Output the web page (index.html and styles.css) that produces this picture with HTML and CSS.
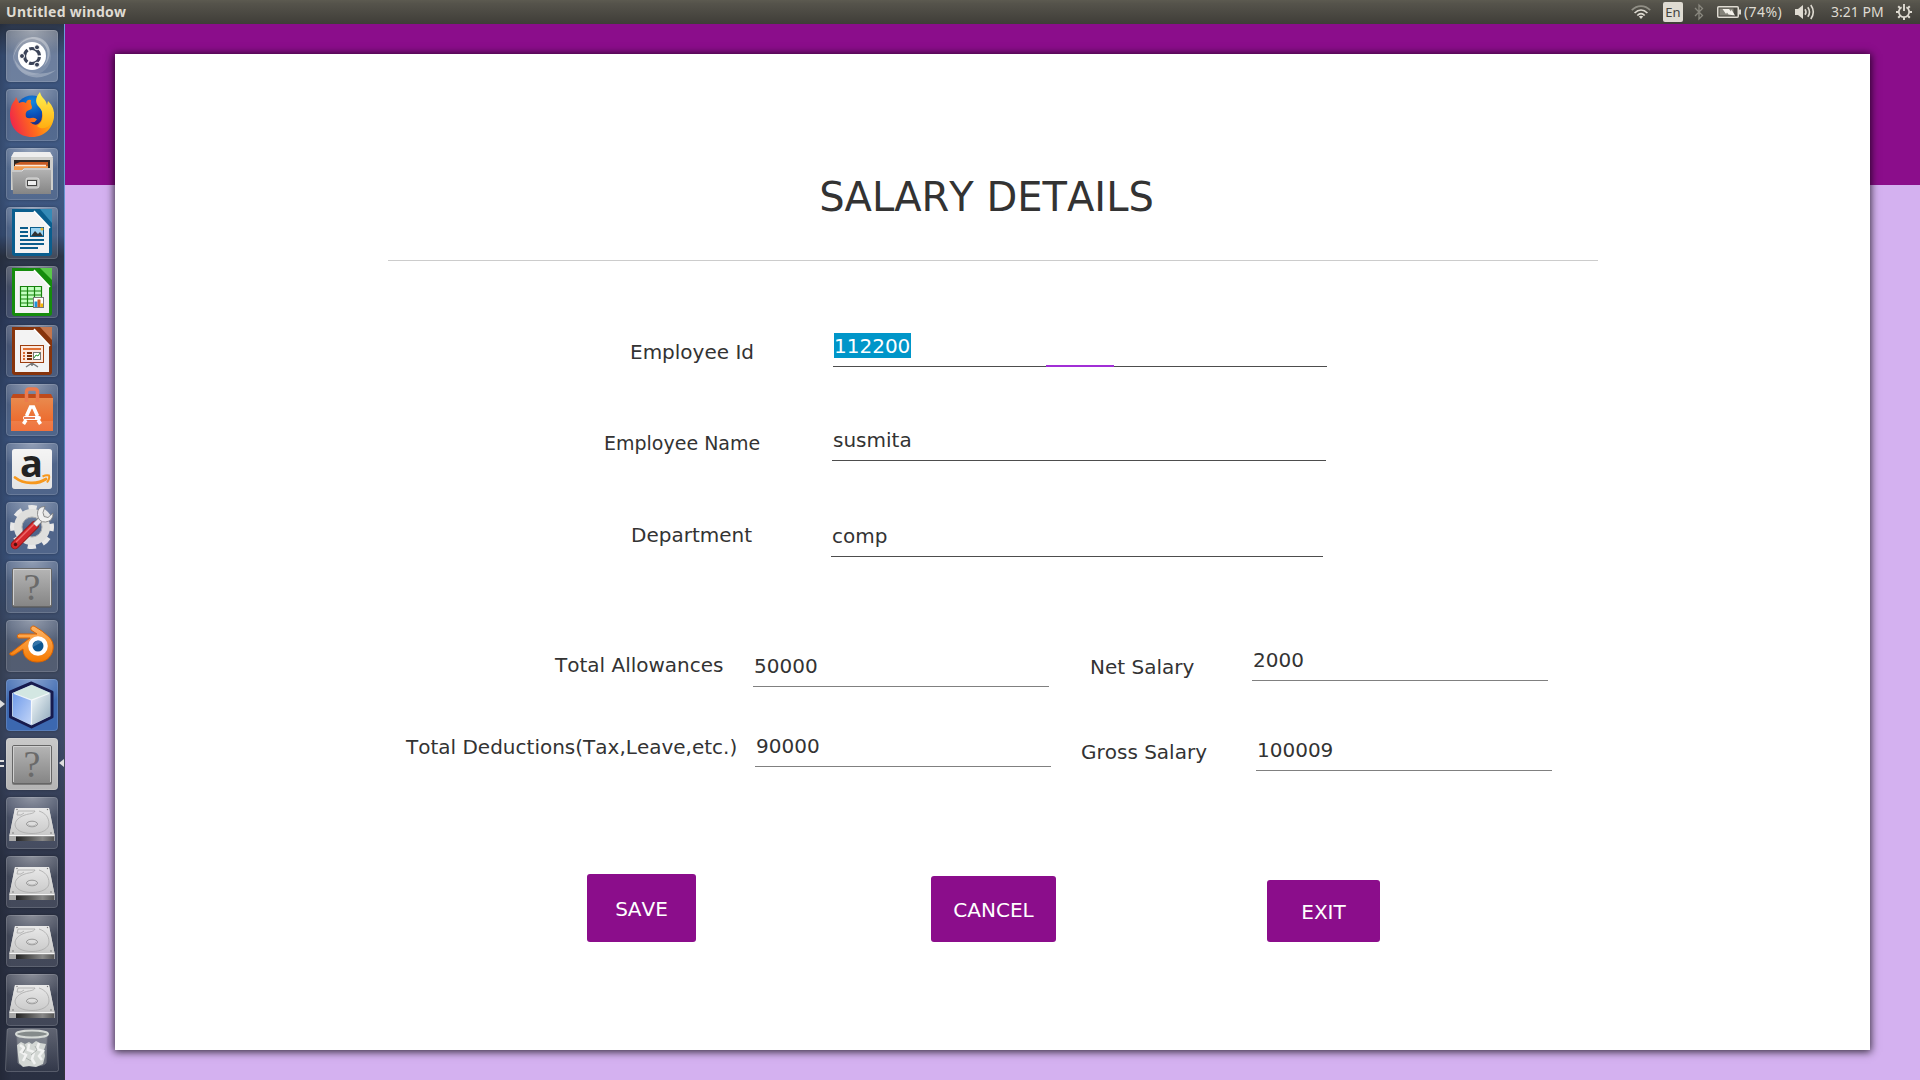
FILE: index.html
```html
<!DOCTYPE html>
<html lang="en">
<head>
<meta charset="utf-8">
<title>Untitled window</title>
<link rel="stylesheet" href="styles.css">
</head>
<body>
<svg class="defs" width="0" height="0" aria-hidden="true">
  <defs>
    <linearGradient id="gloss" x1="0" y1="0" x2="0" y2="1"><stop offset="0" stop-color="#fff" stop-opacity=".25"/><stop offset="1" stop-color="#fff" stop-opacity=".04"/></linearGradient>
    <linearGradient id="silver" x1="0" y1="0" x2="0" y2="1"><stop offset="0" stop-color="#e9e9e9"/><stop offset="1" stop-color="#c9c9c9"/></linearGradient>
    <linearGradient id="gray" x1="0" y1="0" x2="0" y2="1"><stop offset="0" stop-color="#b5b5b5"/><stop offset="1" stop-color="#858585"/></linearGradient>
    <linearGradient id="slot" x1="0" y1="0" x2="1" y2="0"><stop offset="0" stop-color="#222"/><stop offset=".7" stop-color="#888"/><stop offset="1" stop-color="#555"/></linearGradient>
    <linearGradient id="fox" x1="0" y1=".6" x2="1" y2=".3"><stop offset="0" stop-color="#f0264a"/><stop offset=".45" stop-color="#ff6a1c"/><stop offset=".8" stop-color="#ffa80f"/><stop offset="1" stop-color="#ffde2c"/></linearGradient>
    <linearGradient id="tail" x1="0" y1="0" x2="0" y2="1"><stop offset="0" stop-color="#fff251"/><stop offset="1" stop-color="#ffad10"/></linearGradient>
    <radialGradient id="globe" cx=".5" cy=".2" r=".8"><stop offset="0" stop-color="#1488e0"/><stop offset=".5" stop-color="#0a50b8"/><stop offset="1" stop-color="#20216e"/></radialGradient>
    <linearGradient id="bag" x1="0" y1="0" x2="0" y2="1"><stop offset="0" stop-color="#e98a4e"/><stop offset="1" stop-color="#ee5f22"/></linearGradient>
    <linearGradient id="blend" x1="0" y1="0" x2="0" y2="1"><stop offset="0" stop-color="#ffb668"/><stop offset="1" stop-color="#f57900"/></linearGradient>
    <linearGradient id="cubeL" x1="0" y1="0" x2="1" y2="1"><stop offset="0" stop-color="#6f9bea"/><stop offset="1" stop-color="#c4d6f8"/></linearGradient>
    <linearGradient id="cubeR" x1="0" y1="0" x2="1" y2="1"><stop offset="0" stop-color="#f4fafb"/><stop offset="1" stop-color="#90a9bb"/></linearGradient>
    <symbol id="unknown" viewBox="0 0 52 52" overflow="visible">
      <rect x="6" y="8" width="40" height="39" rx="2" fill="#555" opacity=".6"/>
      <rect x="6.500" y="7.500" width="39" height="38" rx="1.500" fill="url(#gray)" stroke="#666"/>
      <path d="M7.500 44V8.500h37V44" fill="none" stroke="#d0d0d0"/>
      <text x="26" y="38.500" class="glyph-q">?</text>
    </symbol>
    <symbol id="disk" viewBox="0 0 52 52">
      <path d="M9 11h34l5.500 27v6H3.500v-6z" fill="#d2d2d0"/>
      <path d="M9 11h34l5.500 27h-45z" fill="url(#silver)"/>
      <path d="M3.500 38.500h45v5.500h-45z" fill="#a9a9a9"/>
      <path d="M10 39.500h38v4.500H10z" fill="url(#slot)"/>
      <path d="M3.500 38.500h45" stroke="#f5f5f5"/>
      <path d="M12 14h17c-1 3-6 2.500-10 4-6 2-9 5-10 9 0 6 7 9.500 17 9.500s17-4 17-9.500c0-7-4-11-10-13M12 14l-1 4h4l3-2" fill="none" stroke="#a9a9a9" stroke-width=".8"/>
      <ellipse cx="26" cy="27" rx="5.500" ry="2.800" fill="#ddd" stroke="#999"/>
      <path d="M22 27a4 2 0 0 0 8 0" fill="none" stroke="#aaa" stroke-width=".7"/>
      <g fill="#777"><circle cx="11" cy="12.500" r=".7"/><circle cx="41.500" cy="12.500" r=".7"/><circle cx="7" cy="36" r=".8"/><circle cx="45" cy="36" r=".8"/></g>
    </symbol>
  </defs>
</svg>

<header class="panel">
  <span class="panel-title">Untitled window</span>
  <div class="indicators">
    <svg class="ind-wifi" width="20" height="14" viewBox="0 0 20 14"><g fill="none" stroke-width="1.700"><path d="M.8 5.200C6-.2 14-.2 19.200 5.200" stroke="#918f86"/><path d="M3.600 8c4-4 8.800-4 12.800 0M6.300 10.500c2.300-2.300 5.100-2.300 7.400 0" stroke="#dfdbd2"/></g><path d="M7.800 11.500Q10 9.800 12.200 11.500L10 14z" fill="#dfdbd2"/></svg>
    <span class="ind-lang">En</span>
    <svg class="ind-bt" width="10" height="16" viewBox="0 0 10 16"><path d="M1 4l7.500 7.500L5 15V1l3.500 3.500L1 12" fill="none" stroke="#8a887f" stroke-width="1.300"/></svg>
    <svg class="ind-bat" width="24" height="12" viewBox="0 0 24 12"><rect x=".75" y=".75" width="20.500" height="10.500" rx="1" fill="none" stroke="#dfdbd2" stroke-width="1.500"/><rect x="2.500" y="2.500" width="14" height="7" fill="#85837a"/><rect x="22" y="3.500" width="2" height="5" fill="#dfdbd2"/><path d="M5.500 3l6.500 0 2 2.500.5-2L18 9.500l-6.500-1-1.500-2-1 1.500z" fill="#f4f1ea"/></svg>
    <span class="ind-pct">(74%)</span>
    <svg class="ind-vol" width="20" height="16" viewBox="0 0 20 16"><path d="M0 5h3l5-4v14l-5-4H0z" fill="#dfdbd2"/><path d="M10 5.200q2 2.800 0 5.600M12.800 3.200q3.400 4.800 0 9.600M15.800 1q5 7 0 14" fill="none" stroke="#dfdbd2" stroke-width="1.600"/></svg>
    <span class="ind-time">3:21 PM</span>
    <svg class="ind-gear" width="16" height="16" viewBox="0 0 16 16"><path d="M5.600 3.300a5.200 5.200 0 1 0 4.800 0" fill="none" stroke="#dfdbd2" stroke-width="1.800"/><path d="M8 0v7" stroke="#dfdbd2" stroke-width="1.900"/><path d="M0 8h2.500M13.500 8H16M8 13.500V16M2.200 2.200L4 4M13.800 2.200L12 4M2.200 13.800L4 12M13.800 13.800L12 12" stroke="#dfdbd2" stroke-width="2"/></svg>
  </div>
</header>

<div class="desktop">
  <nav class="launcher">
    <div class="tile dash"><svg viewBox="0 0 52 52">
      <circle cx="26" cy="26" r="19" fill="#fff" opacity=".12"/>
      <path d="M7 31C8 13 22 4 34 8c12 5 13 20 3 29 8-11 5-24-6-27C20 6 9 16 7 31z" fill="#fff" opacity=".3"/>
      <path d="M50 40C33 54 11 47 8 28c6 14 24 20 42 12z" fill="#fff" opacity=".25"/>
      <circle cx="26" cy="26" r="14" fill="#fff"/>
      <circle cx="26" cy="26" r="7.500" fill="none" stroke="#3b4358" stroke-width="3.200" stroke-dasharray="13.700 2" stroke-dashoffset="-1"/>
      <g fill="#3b4358" stroke="#fff" stroke-width="1"><circle cx="16" cy="26" r="2.500"/><circle cx="31" cy="17.300" r="2.500"/><circle cx="31" cy="34.700" r="2.500"/></g>
    </svg></div>
    <div class="tile"><svg viewBox="0 0 52 52">
      <circle cx="26" cy="23" r="16.500" fill="url(#globe)"/>
      <path d="M10 8L13 14Q17 12 20 14Q21 10 25 11Q24 14 26 18L25.500 20L21 22Q19 24 20 28Q22 30 25 29Q29 28 31 30.500Q29 34 24 33Q28 37 32 35Q37 32 36 23L48 23C49 38 39 48 26 48S4 39 4 26C4 19 6 14 9 11z" fill="url(#fox)"/>
      <path d="M34 3C29 9 29 14 33 18C38 23 39 32 31 37C37 43 48 37 48 25C48 19 45 15 42 12L41 16C40 10 35 9 34 3z" fill="url(#tail)"/>
    </svg></div>
    <div class="tile"><svg viewBox="0 0 52 52">
      <path d="M8 4h36l3 6v32H5V10z" fill="#cfcfcc"/><path d="M8 4h36l3 5H5z" fill="#eee"/>
      <path d="M8 12h36v14H8z" fill="#2c2824"/><path d="M9 16l5-2h28v10H9z" fill="#c65a22"/><path d="M8 18h34v5H8z" fill="#f29a4e"/><path d="M9 17.500h31" stroke="#fbe8d8" stroke-width="1.500"/>
      <path d="M6 22h10l2-2h27v26H7z" fill="url(#gray)"/><path d="M6 23h10l2-2h27" fill="none" stroke="#e1e1e1"/>
      <rect x="20" y="30" width="13" height="10" rx="2" fill="#b9b9b7" stroke="#ddd"/><rect x="21.500" y="32.500" width="9" height="5" fill="#eee" stroke="#444"/>
    </svg></div>
    <div class="tile"><svg viewBox="0 0 52 52">
      <path d="M6 2h40v44q0 3-3 3H9q-3 0-3-3z" fill="#0a5e8e"/><path d="M34 2h12v14z" fill="#348ab7"/><path d="M9 5h20l14 15v26H9z" fill="#f3f3f3"/><path d="M28 4l16 17" stroke="#fff" stroke-width="1.500"/>
      <path d="M14 21h8M14 25h8M14 29h8M14 33h24M14 37h24M14 41h18" stroke="#0b5d8c" stroke-width="2"/><rect x="24.500" y="20.500" width="13" height="9" fill="#9bd3f1" stroke="#0b5d8c"/><path d="M25 29l4-5 3 3 2-2 3 4z" fill="#333"/><circle cx="36" cy="22" r="1.500" fill="#efb92e"/>
    </svg></div>
    <div class="tile"><svg viewBox="0 0 52 52">
      <path d="M6 2h40v45q0 3-3 3H9q-3 0-3-3z" fill="#158c0c"/><path d="M34 2h12v12z" fill="#5ac84a"/><path d="M9 5h20l14 15v27H9z" fill="#f3f3f3"/><path d="M28 4l16 17" stroke="#fff" stroke-width="1.500"/>
      <path d="M14.500 20.500h21v20h-21z" fill="#c3ffc0"/><path d="M14.500 20.500h21v20h-21zM14.500 25h21M14.500 29h21M14.500 33h21M14.500 37h21M21.500 20v20M28.500 20v20" fill="none" stroke="#16820c" stroke-width="1.200"/><rect x="27.500" y="31.500" width="10" height="10" fill="#fff" stroke="#777"/><path d="M28.500 35.500h3v5.500h-3z" fill="#1e93dc"/><path d="M31.500 33.500h3v7.500h-3z" fill="#d0611d"/><path d="M34.500 37.500h2.500v3.500h-2.500z" fill="#f2b705"/>
    </svg></div>
    <div class="tile"><svg viewBox="0 0 52 52">
      <path d="M6 2h40v45q0 3-3 3H9q-3 0-3-3z" fill="#87340c"/><path d="M34 2h12v13z" fill="#c5764d"/><path d="M9 5h20l14 15v27H9z" fill="#f3f3f3"/><path d="M28 4l16 17" stroke="#fff" stroke-width="1.500"/>
      <rect x="14.500" y="20.500" width="23" height="17" fill="#fce9df" stroke="#9d3e0f"/><path d="M17 24h18" stroke="#e07135" stroke-width="2"/><path d="M17 28h2M17 31h2M17 34h2" stroke="#d96a32" stroke-width="2"/><path d="M21 28h5M21 31h5M21 34h5" stroke="#7a2e08" stroke-width="2"/><rect x="27.500" y="27.500" width="7" height="7" fill="#fff" stroke="#777"/><path d="M28 33l2-3 2 1 2-3" fill="none" stroke="#23942c"/><path d="M26 38v3M26 38l-6 4M26 38l6 4" stroke="#777" stroke-width="1.500"/>
    </svg></div>
    <div class="tile"><svg viewBox="0 0 52 52">
      <path d="M7 10h38l2 4H5z" fill="#bf4a1a"/><path d="M5 14h42v33H5z" fill="url(#bag)"/><path d="M5 37h42v10H5z" fill="#fff" opacity=".12"/>
      <path d="M21 18V8q0-3 3-3h5q3 0 3 3v10" transform="translate(-.5)" fill="none" stroke="#ec7a4d" stroke-width="3.500"/>
      <path d="M17.500 40l2.500-4M34.500 40l-2.500-4M20.500 32l4-9h3l4 9" fill="none" stroke="#fff" stroke-width="3.500"/><rect x="17" y="32" width="18" height="4" rx="2" fill="#fff"/><path d="M18 34h11" stroke="#dd4814" stroke-width="1.400"/>
    </svg></div>
    <div class="tile"><svg viewBox="0 0 52 52">
      <rect x="6" y="6" width="40" height="40" rx="3" fill="url(#silver)"/><rect x="6" y="6" width="40" height="40" rx="3" fill="#fff" opacity=".5"/>
      <text x="25.500" y="33.500" class="glyph-a">a</text>
      <path d="M9 34.500c9 7 23 7 31 1.500" fill="none" stroke="#f7981d" stroke-width="2.800" stroke-linecap="round"/><path d="M36.500 33.500q4-2 6.500-1 1 3-2 7" fill="none" stroke="#f7981d" stroke-width="2"/>
    </svg></div>
    <div class="tile"><svg viewBox="0 0 52 52">
      <circle cx="26" cy="25" r="19.500" fill="none" stroke="#e8e8e8" stroke-width="5" stroke-dasharray="8.300 7.015" stroke-dashoffset="4.150"/><circle cx="26" cy="25" r="14" fill="none" stroke="#dfdfdd" stroke-width="8"/><circle cx="26" cy="25" r="10" fill="none" stroke="#aaa"/>
      <path d="M9 43L29 23" stroke="#901414" stroke-width="8.500" stroke-linecap="round"/><path d="M9 43L29 23" stroke="#d3282c" stroke-width="7" stroke-linecap="round"/><path d="M10 40L29 21" stroke="#ef6a6a" stroke-width="1.500"/><circle cx="9.500" cy="42.500" r="1.700" fill="#501010"/>
      <path d="M29 23l5-5" stroke="#777" stroke-width="6"/><path d="M29 23l6-6" stroke="#eee" stroke-width="4.500"/>
      <path d="M39 4.500q-8 0-7.500 8 1 8 8 7.500 8-1 7.500-9l-5 4.500-4-1-1-4z" fill="#f0f0f0" stroke="#777" stroke-width=".8"/>
    </svg></div>
    <div class="tile"><svg viewBox="0 0 52 52"><use href="#unknown"/></svg></div>
    <div class="tile"><svg viewBox="0 0 52 52">
      <path d="M6 32l18-14H12q-2-3 1-4h18l-6-4q-1-4 3-4 9 5 15 11c5 5 5 11 3 16-3 7-9 9-15 9-8 0-14-5-14-13L8 35q-5 1-4-2z" fill="url(#blend)" stroke="#dd6400" stroke-width="1" stroke-linejoin="round"/>
      <circle cx="32" cy="26" r="9.800" fill="#fff"/><circle cx="32" cy="26" r="5.500" fill="#0c5590"/><path d="M27 27a5.500 5.500 0 0 1 9-5z" fill="#4682b4" opacity=".7"/>
    </svg></div>
    <div class="tile netbeans"><svg viewBox="0 0 52 52">
      <path d="M25.500 4L46 13v25L25.500 48 4.500 38V13z" fill="#b8cce0" stroke="#171b4e" stroke-width="3" stroke-linejoin="round"/>
      <path d="M25.500 6L44 14l-18.500 7L7 14z" fill="#d3e7e2"/><path d="M7 14l18.500 7v25L7 37z" fill="url(#cubeL)"/><path d="M25.500 21L44 14v23l-18.500 9z" fill="url(#cubeR)"/><path d="M8 14.500l17.500 6.500L43 14.500M25.500 21v24" fill="none" stroke="#fff" stroke-width="1.200" opacity=".8"/>
    </svg><i class="run-one"></i></div>
    <div class="tile active"><svg viewBox="0 0 52 52"><use href="#unknown"/></svg><i class="run-two"></i><i class="focus-arrow"></i></div>
    <div class="tile"><svg viewBox="0 0 52 52"><use href="#disk"/></svg></div>
    <div class="tile"><svg viewBox="0 0 52 52"><use href="#disk"/></svg></div>
    <div class="tile"><svg viewBox="0 0 52 52"><use href="#disk"/></svg></div>
    <div class="tile"><svg viewBox="0 0 52 52"><use href="#disk"/></svg></div>
    <div class="trash"><svg viewBox="0 0 54 44">
      <path d="M4 .5h46q2 0 2 2l1.500 39q0 2-2 2H2.500q-2 0-2-2L2 2.500q0-2 2-2z" fill="url(#gloss)" stroke="#fff" stroke-opacity=".2"/>
      <path d="M12 6l1 29q1 3 14 3t14-3l1-29z" fill="#dfe5e0" opacity=".3" stroke="#ccc"/>
      <path d="M12 17l4-3 4 2 4-2 3 2 4-3 4 2 6 1-2 6 1 6-2 8-7 3-7-1-6 1-4-4-1-8z" fill="#d3d7d4"/>
      <path d="M15 17l4 3-3 4 5 3-3 6M24 16l-1 6 6 2-2 7 3 5M34 15l-2 6 6 2-4 5 3 4" fill="none" stroke="#f2f3f2" stroke-width="2.500"/><path d="M19 16l2 4-3 5M30 18l2 4-6 5M21 30l5 3" fill="none" stroke="#acb1ae"/>
      <ellipse cx="27" cy="6" rx="16" ry="3.500" fill="#858b8b" stroke="#d5d9d6" stroke-width="2"/>
    </svg></div>
  </nav>

  <main class="window">
    <form class="card">
      <h1 class="heading">SALARY DETAILS</h1>
      <div class="rule"></div>

      <div class="row row-id"><label>Employee Id</label><div class="field"><span class="selected">112200</span><i class="focus-line"></i></div></div>
      <div class="row row-name"><label>Employee Name</label><div class="field">susmita</div></div>
      <div class="row row-dept"><label>Department</label><div class="field">comp</div></div>

      <div class="row row-allow"><label>Total Allowances</label><div class="field short">50000</div><label class="second">Net Salary</label><div class="field short net">2000</div></div>
      <div class="row row-deduct"><label>Total Deductions(Tax,Leave,etc.)</label><div class="field short">90000</div><label class="second">Gross Salary</label><div class="field short gross">100009</div></div>

      <div class="actions">
        <button type="button" class="save">SAVE</button>
        <button type="button" class="cancel">CANCEL</button>
        <button type="button" class="exit">EXIT</button>
      </div>
    </form>
  </main>
</div>
</body>
</html>
```
FILE: styles.css
```css
* { box-sizing: border-box; }
body {
  margin: 0;
  width: 1920px;
  height: 1080px;
  overflow: hidden;
  font-family: "DejaVu Sans", sans-serif;
  font-kerning: none;
  color: #333;
}
.defs { display: block; height: 0; }
svg { display: block; overflow: visible; }

/* top panel */
.panel {
  height: 24px;
  display: flex;
  align-items: center;
  justify-content: space-between;
  padding: 0 8px 0 6px;
  background: linear-gradient(#5c5a50, #55534b 15%, #3f3d38);
  color: #dfdbd2;
  font-family: "Noto Sans", sans-serif;
  font-size: 14px;
  line-height: 22px;
}
.panel-title { font-weight: 700; font-size: 14px; letter-spacing: .3px; }
.indicators { display: flex; align-items: center; }
.indicators span { white-space: nowrap; }
.ind-wifi { margin-right: 12px; }
.ind-lang {
  width: 20px;
  height: 20px;
  margin-right: 11px;
  border-radius: 2px;
  background: #dfdbd2;
  color: #45433e;
  font-size: 13px;
  line-height: 20px;
  text-align: center;
}
.ind-bt { margin-right: 13px; }
.ind-bat { margin-right: 3px; }
.ind-pct { width: 51px; letter-spacing: .4px; }
.ind-vol { margin-right: 16px; }
.ind-time { width: 65px; }

/* launcher */
.desktop { display: flex; height: 1056px; }
.launcher {
  width: 65px;
  padding: 6px 6px 0;
  display: flex;
  flex-direction: column;
  gap: 7px;
  border-right: 1px solid #4f78b0;
  border-image: linear-gradient(#6c9edb, #547fb5 45%, #434a58 70%, #33333a) 1;
  background:
    linear-gradient(90deg, rgba(0,0,0,.16), transparent 18%),
    linear-gradient(#2c3649, #3a527b 3%, #415b85 14%, #3a527b 20%, #2d3648 22%, #2d3a5a 26%, #3a527c 38%, #3b537c 50%, #3e4960 60%, #3d4966 68%, #2d3448 80%, #2a3042);
}
.tile {
  position: relative;
  flex: none;
  width: 52px;
  height: 52px;
  border-radius: 4px;
  background: radial-gradient(ellipse 75% 50% at 50% 0, rgba(255,255,255,.38), transparent), rgba(255,255,255,.11);
  box-shadow: inset 0 0 0 1px rgba(255,255,255,.14), 0 0 3px rgba(0,0,0,.3);
}
.tile svg { width: 52px; height: 52px; }
.dash { background-color: rgba(255,255,255,.26); }
.netbeans { background-color: #3c68b0; }
.active { background: linear-gradient(#c9c9c9, #b4b4b4); }
.run-one, .run-two, .focus-arrow { position: absolute; }
.run-one {
  left: -6px; top: 21px;
  border: solid transparent;
  border-width: 4px 0 4px 5px;
  border-left-color: #ddd;
}
.run-two {
  left: -6px; top: 22px;
  width: 4px; height: 7px;
  border: solid #ddd;
  border-width: 2px 0;
}
.focus-arrow {
  right: -6px; top: 21px;
  border: solid transparent;
  border-width: 4px 5px 4px 0;
  border-right-color: #ddd;
}
.trash { margin: -5px 0 0 -1px; width: 54px; height: 44px; }
.glyph-q { font: 38px "Liberation Serif", serif; fill: #6a6a6a; text-anchor: middle; }
.glyph-a { font: bold 38px "Open Sans", sans-serif; fill: #222; text-anchor: middle; }

/* window */
.window {
  flex: none;
  width: 1855px;
  padding: 30px 50px;
  background: linear-gradient(#8b0d8b 161px, #d4b1f0 161px);
}
.card {
  display: flex;
  flex-direction: column;
  width: 1755px;
  height: 996px;
  background: #fff;
  box-shadow: 0 1px 8px 1px rgba(0,0,0,.75);
}
.heading {
  margin: 119px 12px 0 0;
  font-size: 40px;
  line-height: 48px;
  font-weight: 400;
  text-align: center;
}
.rule { width: 1210px; height: 1px; margin: 39px 0 0 273px; background: #ccc; }

.row { display: flex; align-items: flex-start; font-size: 20px; }
.row label { flex: none; line-height: 24px; white-space: nowrap; }
.field {
  position: relative;
  flex: none;
  width: 494px;
  height: 34px;
  padding-left: 1px;
  line-height: 27px;
  border-bottom: 1px solid #4d4d4d;
}
.short { width: 296px; border-color: #808080; }
.selected { display: block; width: 77px; height: 25px; background: #0096c9; color: #fff; }
.focus-line { position: absolute; left: 213px; bottom: -1px; width: 68px; height: 2px; background: #a12fd6; }

.row-id { margin: 72px 0 0 515px; }
.row-id label { width: 203px; padding-top: 7px; }
.row-name { margin: 60px 0 0 489px; }
.row-name label { width: 228px; padding-top: 4px; font-size: 19px; }
.row-dept { margin: 62px 0 0 516px; }
.row-dept label { width: 200px; }
.row-dept .field { width: 492px; }

.row-allow { height: 40px; margin: 90px 0 0 440px; }
.row-allow label { width: 198px; padding-top: 6px; }
.row-allow .field { margin-top: 6px; }
.row-allow .second { width: 162px; margin-left: 41px; padding-top: 8px; }
.row-allow .field.net { margin-top: 0; }
.row-deduct { height: 38px; margin: 46px 0 0 291px; }
.row-deduct label { width: 349px; padding-top: 2px; }
.row-deduct .second { width: 175px; margin-left: 30px; padding-top: 7px; }
.row-deduct .gross { margin-top: 4px; }

.actions { display: flex; align-items: flex-end; margin: 103px 0 0 472px; }
.actions button {
  flex: none;
  padding: 2px 0 0;
  border: 0;
  border-radius: 3px;
  background: #8b0d8b;
  color: #fff;
  font: 20px "DejaVu Sans", sans-serif;
  font-kerning: none;
}
.actions .save { width: 109px; height: 68px; }
.actions .cancel { width: 125px; height: 66px; margin-left: 235px; }
.actions .exit { width: 113px; height: 62px; margin-left: 211px; }
```
